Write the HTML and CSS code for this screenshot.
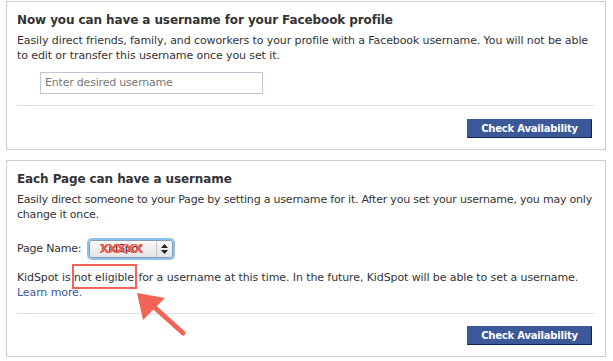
FILE: index.html
```html
<!DOCTYPE html>
<html lang="en">
<head>
    <meta charset="UTF-8">
    <title>Usernames</title>
    <link rel="stylesheet" href="styles.css">
</head>
<body>

    <!-- Profile username -->
    <div class="panel">
        <h2>Now you can have a username for your Facebook profile</h2>
        <p>Easily direct friends, family, and coworkers to your profile with a Facebook username. You will not be able to edit or transfer this username once you set it.</p>
        <div class="name-field">
            <input type="text" placeholder="Enter desired username">
        </div>
        <div class="divider"></div>
        <div class="actions">
            <button>Check Availability</button>
        </div>
    </div>

    <!-- Page username -->
    <div class="panel">
        <h2>Each Page can have a username</h2>
        <p class="tight">Easily direct someone to your Page by setting a username for it. After you set your username, you may only change it once.</p>
        <div class="page-row">
            <span>Page Name:</span>
            <div class="select">
                <span class="select-value">KidSpot</span>
                <span class="censor">XXXXX</span>
                <span class="select-arrows">
                    <svg width="7" height="10" viewBox="0 0 7 10"><path d="M3.5 0 L7 4 L0 4 Z M0 6 L7 6 L3.5 10 Z" fill="#222"/></svg>
                </span>
            </div>
        </div>
        <p class="status">KidSpot is <span class="mark">not eligible</span> for a username at this time. In the future, KidSpot will be able to set a username.<br><a href="#">Learn more.</a></p>
        <svg class="arrow" width="60" height="50" viewBox="0 0 60 50">
            <path d="M48 40 L18 13" stroke="#f26457" stroke-width="5" stroke-linecap="round"/>
            <path d="M2 0 L30 5 L8 27 Z" fill="#f26457"/>
        </svg>
        <div class="divider divider-low"></div>
        <div class="actions">
            <button>Check Availability</button>
        </div>
    </div>

</body>
</html>
```

FILE: styles.css
```css
body {
    font-family: "Lucida Grande", "DejaVu Sans", sans-serif;
    margin: 0;
    padding: 1px 7px 0 6px;
    background: #fff;
    color: #333;
}

/* Panels */
.panel {
    position: relative;
    border: 1px solid #cccccc;
    padding: 9px 10px 11px;
    margin-bottom: 10px;
}

.panel h2 {
    font-size: 12px;
    line-height: 18px;
    margin: 0 0 4px;
    color: #333;
    letter-spacing: -0.1px;
}

.panel p {
    font-size: 11px;
    line-height: 15px;
    margin: 0;
    letter-spacing: -0.1px;
}

.panel p.tight {
    letter-spacing: -0.2px;
}

/* Username input */
.name-field {
    margin: 8px 0 0 23px;
}

.name-field input {
    width: 223px;
    height: 22px;
    box-sizing: border-box;
    border: 1px solid #bdc7d8;
    padding: 0 4px;
    font-family: inherit;
    font-size: 11px;
    letter-spacing: -0.2px;
    color: #333;
}

.name-field input::placeholder {
    color: #777;
}

.divider {
    border-top: 1px solid #d8dfea;
    margin: 11px 0 13px;
}

.divider-low {
    margin-top: 13px;
    margin-bottom: 12px;
}

.actions {
    display: flex;
    justify-content: flex-end;
    padding-right: 3px;
}

.actions button {
    width: 125px;
    height: 19px;
    background: #3b5998;
    color: #fff;
    font-family: inherit;
    font-size: 10px;
    font-weight: bold;
    letter-spacing: -0.2px;
    border: 1px solid #3b5998;
    border-right-color: #0e1f5b;
    border-bottom-color: #0e1f5b;
    padding: 0;
    cursor: pointer;
}

/* Page select */
.page-row {
    display: flex;
    align-items: center;
    gap: 8px;
    margin-top: 18px;
    font-size: 11px;
    letter-spacing: -0.2px;
}

.select {
    position: relative;
    display: flex;
    align-items: center;
    width: 82px;
    height: 16px;
    border: 1px solid #8a9cb5;
    border-radius: 3px;
    background: linear-gradient(#fafafa, #e4e4e4);
    box-shadow: 0 0 0 2px #8ec0ee;
    font-size: 11px;
}

.select-value {
    flex: 1;
    padding-left: 11px;
    color: #222;
}

.censor {
    position: absolute;
    left: 9px;
    top: 0;
    color: #ef5a4d;
    font-size: 13px;
    font-weight: bold;
    line-height: 16px;
    letter-spacing: -1.5px;
}

.select-arrows {
    width: 15px;
    height: 16px;
    display: flex;
    align-items: center;
    justify-content: center;
    border-left: 1px solid #c8c8c8;
}

.status {
    margin-top: 12px !important;
}

.status a {
    color: #3b5998;
    text-decoration: none;
}

.mark {
    padding: 5px 1px 3px 0;
    outline: 2px solid #f26457;
    outline-offset: 0;
}

.arrow {
    position: absolute;
    left: 128px;
    top: 132px;
}
```
